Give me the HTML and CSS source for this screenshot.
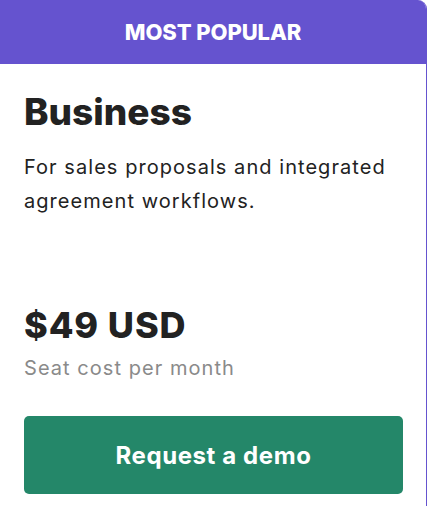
FILE: index.html
```html
<!DOCTYPE html>
<html lang="en">
<head>
<meta charset="utf-8">
<title>Business plan</title>
<link rel="stylesheet" href="styles.css">
</head>
<body>
<div class="card">
  <div class="badge">MOST POPULAR</div>
  <div class="body">
    <h2 class="plan">Business</h2>
    <p class="desc">For sales proposals and integrated agreement workflows.</p>
    <div class="price">$49 USD</div>
    <div class="unit">Seat cost per month</div>
    <a class="cta" href="#">Request a demo</a>
  </div>
</div>
</body>
</html>
```
FILE: styles.css
```css
html, body {
  margin: 0;
  padding: 0;
  background: #fff;
}
body {
  font-family: Inter, "Noto Sans", sans-serif;
  overflow: hidden;
}
.card {
  margin-left: -8px;
  width: 435px;
  box-sizing: border-box;
  border-right: 1px solid #6553cf;
  border-top-right-radius: 9px;
  overflow: hidden;
  height: 506px;
}
.badge {
  height: 64px;
  background: #6553cf;
  color: #fff;
  font-weight: 800;
  font-size: 22px;
  display: flex;
  align-items: center;
  justify-content: center;
  padding-left: 8px;
  letter-spacing: -0.1px;
}
.body {
  padding: 24px 23px 0 32px;
  display: flex;
  flex-direction: column;
}
.plan {
  margin: 0;
  font-size: 37px;
  line-height: 48px;
  font-weight: 800;
  color: #222;
  letter-spacing: 0;
}
.desc {
  margin: 14px 0 0;
  font-size: 20px;
  line-height: 34px;
  color: #222;
  letter-spacing: 1.05px;
  height: 153px;
}
.price {
  font-size: 36px;
  line-height: 44px;
  font-weight: 800;
  color: #222;
  letter-spacing: 0.9px;
}
.unit {
  font-size: 20px;
  line-height: 28px;
  color: #8a8a8a;
  letter-spacing: 1.05px;
  margin-top: 7px;
}
.cta {
  margin-top: 34px;
  height: 78px;
  background: #248769;
  border-radius: 5px;
  color: #fff;
  text-decoration: none;
  font-weight: 700;
  font-size: 24px;
  letter-spacing: 0.6px;
  display: flex;
  align-items: center;
  justify-content: center;
}
```
